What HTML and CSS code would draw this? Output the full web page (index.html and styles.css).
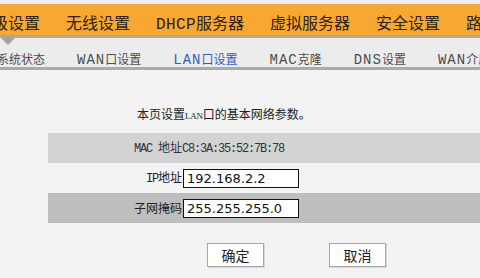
FILE: index.html
```html
<!DOCTYPE html>
<html>
<head>
<meta charset="utf-8">
<link rel="stylesheet" href="styles.css">
</head>
<body>
<div class="header">
  <div class="topgap"></div>
  <div class="mainmenu">
    <span class="mitem">高级设置</span>
    <span class="mitem">无线设置</span>
    <span class="mitem"><span class="mlat">DHCP</span>服务器</span>
    <span class="mitem">虚拟服务器</span>
    <span class="mitem">安全设置</span>
    <span class="mitem">路由功能</span>
  </div>
  <div class="line1"></div>
  <div class="submenu">
    <span class="pointer"></span>
    <span class="sitem">系统状态</span>
    <span class="sitem"><span class="slat">WAN</span>口设置</span>
    <span class="sitem active"><span class="slat">LAN</span>口设置</span>
    <span class="sitem"><span class="slat">MAC</span>克隆</span>
    <span class="sitem"><span class="slat">DNS</span>设置</span>
    <span class="sitem"><span class="slat">WAN</span>介质类型</span>
  </div>
  <div class="line2"></div>
</div>
<div class="content">
  <p class="intro">本页设置<span class="tiny">LAN</span>口的基本网络参数。</p>
  <table class="form">
    <tr class="row-a">
      <td class="label"><span class="lat">MAC </span>地址</td>
      <td class="value"><span class="lat">C8:3A:35:52:7B:78</span></td>
    </tr>
    <tr class="row-b">
      <td class="label"><span class="lat">IP</span>地址</td>
      <td class="value"><input class="field" type="text" value="192.168.2.2"></td>
    </tr>
    <tr class="row-c">
      <td class="label">子网掩码</td>
      <td class="value"><input class="field" type="text" value="255.255.255.0"></td>
    </tr>
  </table>
  <div class="buttons">
    <button class="btn">确定</button>
    <button class="btn">取消</button>
  </div>
</div>
</body>
</html>
```
FILE: styles.css
```css
html, body {
  margin: 0;
  padding: 0;
}
body {
  width: 480px;
  height: 278px;
  overflow: hidden;
  background: #f2f3f2;
  font-family: "Noto Sans CJK SC", "Liberation Sans", sans-serif;
  color: #222;
}
.header {
  width: 480px;
  overflow: hidden;
}
.topgap {
  height: 4px;
  background: #eeeeee;
}
.mainmenu {
  height: 23px;
  padding-top: 8px;
  background: #f8a832;
  display: flex;
  gap: 26px;
  margin-left: -24px;
  padding-left: 0;
  white-space: nowrap;
  font-size: 16px;
  line-height: 20px;
  color: #2b2214;
}
.mainmenu .mitem {
  flex: none;
}
.mlat {
  font-family: "Liberation Mono", monospace;
  font-size: 16px;
  letter-spacing: 0.4px;
}
.line1 {
  height: 3px;
  background: #a9a9a9;
}
.submenu {
  position: relative;
  height: 16px;
  padding-top: 13px;
  background: #ececec;
  display: flex;
  gap: 32px;
  margin-left: -3px;
  white-space: nowrap;
  font-size: 12px;
  line-height: 16px;
  color: #4d4d4d;
}
.submenu .sitem {
  flex: none;
}
.submenu .active {
  color: #3060c0;
}
.slat {
  font-family: "Liberation Mono", monospace;
  font-size: 14px;
  letter-spacing: 1px;
}
.pointer {
  position: absolute;
  left: 4px;
  top: 0;
  width: 0;
  height: 0;
  border-left: 7px solid transparent;
  border-right: 7px solid transparent;
  border-top: 7px solid #a3a3a3;
}
.line2 {
  height: 3px;
  background: #aaaaaa;
}
.content {
  padding-top: 36px;
}
.intro {
  margin: 0 0 9px 137px;
  font-size: 12px;
  line-height: 16px;
  color: #222;
}
.tiny {
  font-family: "Liberation Serif", serif;
  font-size: 9px;
  letter-spacing: -0.3px;
}
.form {
  margin-left: 48px;
  width: 480px;
  border-collapse: collapse;
  border-spacing: 0;
  font-size: 12px;
}
.form td {
  padding: 0;
  height: 30px;
  line-height: 16px;
  white-space: nowrap;
}
.form .label {
  width: 134px;
  text-align: right;
}
.form .value {
  text-align: left;
}
.row-a {
  background: #d3d3d3;
  color: #333;
}
.row-b {
  background: #f2f3f2;
}
.row-c {
  background: #bdbebd;
}
.lat {
  font-family: "Liberation Mono", monospace;
  font-size: 12px;
  letter-spacing: -1.2px;
}
.field {
  box-sizing: border-box;
  width: 116px;
  height: 19px;
  margin: 0 0 0 1px;
  padding: 0 0 0 3px;
  border: 1px solid #111;
  background: #fff;
  font-family: "DejaVu Sans", sans-serif;
  font-size: 13px;
  color: #111;
  vertical-align: middle;
  outline: none;
}
.buttons {
  margin-top: 20px;
  margin-left: 207px;
  display: flex;
  gap: 65px;
}
.btn {
  box-sizing: border-box;
  width: 57px;
  height: 24px;
  padding: 0;
  border: 1px solid #a6a6a6;
  background: #ffffff;
  box-shadow: 1px 1px 0 #d8d8d8;
  font-family: "Noto Sans CJK SC", sans-serif;
  font-size: 14px;
  line-height: 20px;
  color: #222;
}
```
